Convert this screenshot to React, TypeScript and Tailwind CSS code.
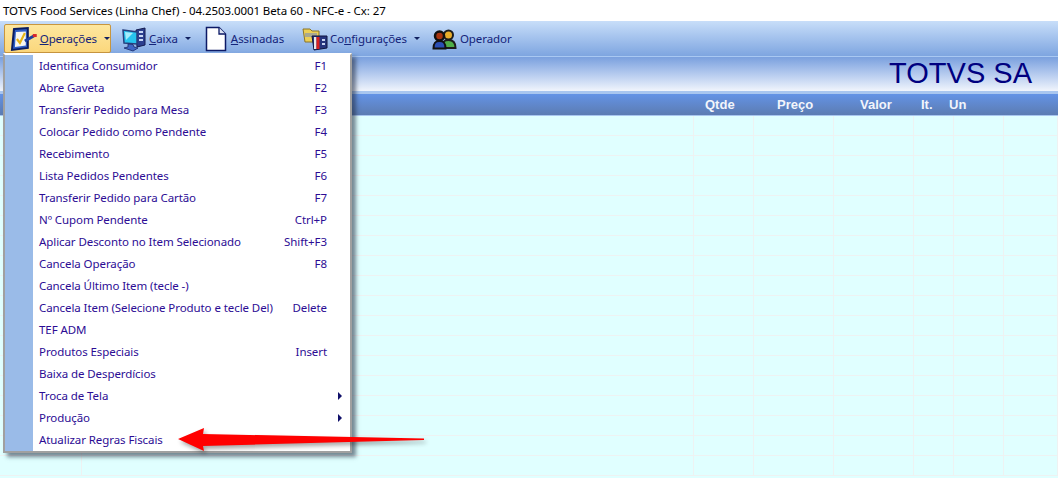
import React from 'react';

const menuItems: { label: string; shortcut?: string; submenu?: boolean }[] = [
  { label: 'Identifica Consumidor', shortcut: 'F1' },
  { label: 'Abre Gaveta', shortcut: 'F2' },
  { label: 'Transferir Pedido para Mesa', shortcut: 'F3' },
  { label: 'Colocar Pedido como Pendente', shortcut: 'F4' },
  { label: 'Recebimento', shortcut: 'F5' },
  { label: 'Lista Pedidos Pendentes', shortcut: 'F6' },
  { label: 'Transferir Pedido para Cartão', shortcut: 'F7' },
  { label: 'Nº Cupom Pendente', shortcut: 'Ctrl+P' },
  { label: 'Aplicar Desconto no Item Selecionado', shortcut: 'Shift+F3' },
  { label: 'Cancela Operação', shortcut: 'F8' },
  { label: 'Cancela Último Item (tecle -)' },
  { label: 'Cancela Item (Selecione Produto e tecle Del)', shortcut: 'Delete' },
  { label: 'TEF ADM' },
  { label: 'Produtos Especiais', shortcut: 'Insert' },
  { label: 'Baixa de Desperdícios' },
  { label: 'Troca de Tela', submenu: true },
  { label: 'Produção', submenu: true },
  { label: 'Atualizar Regras Fiscais' },
];

const rows = Array.from({ length: 18 });
const gridCols = 'grid grid-cols-[82px_612px_60px_80px_80px_40px_50px_1fr]';

function Caret() {
  return <span className="ml-[7px] h-0 w-0 border-x-[3px] border-t-[3px] border-x-transparent border-t-[#10205f]" />;
}

function OperacoesIcon() {
  return (
    <svg width="32" height="26" viewBox="0 0 32 26">
      <path d="M6 3 L20 2 L20 22 L4 24 Z" fill="#2f5fc8" stroke="#0a1c60" strokeWidth="2" />
      <path d="M8 6 L18 5.5 L18 19.5 L7 21 Z" fill="#f6f6f2" />
      <path d="M9 13 L12 17 L17 7" fill="none" stroke="#e6b416" strokeWidth="2.2" />
      <path d="M17 15 L26 10" stroke="#1d3f9e" strokeWidth="3" />
      <rect x="25" y="8" width="4" height="3" fill="#d8242a" />
    </svg>
  );
}

function CaixaIcon() {
  return (
    <svg width="26" height="26" viewBox="0 0 26 26">
      <path d="M15 4 L24 2 L24 19 L16 21 Z" fill="#2c3f8f" stroke="#141c50" />
      <rect x="18" y="5" width="4" height="2" fill="#c9d8f5" />
      <rect x="18" y="9" width="4" height="2" fill="#c9d8f5" />
      <rect x="18" y="13" width="4" height="2" fill="#c9d8f5" />
      <path d="M2 4 L16 6 L16 18 L3 17 Z" fill="#27c4ee" stroke="#28407e" strokeWidth="1.5" />
      <path d="M4 6 L12 7 L5 14 Z" fill="#a6ecfb" />
      <path d="M7 18 L12 18.5 L13 21 L17 22 L12 25 L3 22 L7 21 Z" fill="#3e66c4" stroke="#1b2a68" strokeWidth="0.8" />
    </svg>
  );
}

function DocumentoIcon() {
  return (
    <svg width="22" height="26" viewBox="0 0 22 26">
      <path d="M1.5 1.5 H14 L20.5 8 V24.5 H1.5 Z" fill="#ffffff" stroke="#0c1a66" strokeWidth="1.5" />
      <path d="M14 1.5 V8 H20.5" fill="#dfe6f5" stroke="#0c1a66" strokeWidth="1.3" />
    </svg>
  );
}

function ConfigIcon() {
  return (
    <svg width="26" height="24" viewBox="0 0 26 24">
      <path d="M1 2 H8 L10 4 H17 V15 H3 Z" fill="#eccf55" stroke="#8a7428" />
      <rect x="3" y="6" width="12" height="4" fill="#a8a890" />
      <path d="M10 9 H25 V21 L12 23 Z" fill="#26357e" stroke="#0f1440" />
      <rect x="12" y="10" width="2.5" height="12" fill="#e9e9e9" />
      <rect x="14.5" y="10" width="3" height="12" fill="#d8201f" />
      <rect x="20" y="12" width="3" height="2" fill="#c7d3f0" />
      <rect x="20" y="16" width="3" height="2" fill="#c7d3f0" />
    </svg>
  );
}

function OperadorIcon() {
  return (
    <svg width="26" height="22" viewBox="0 0 26 22">
      <circle cx="16.5" cy="7" r="4.5" fill="#e9ad2a" stroke="#1c1c1c" strokeWidth="2" />
      <path d="M10 20 C10 13 13 12 16.5 12 C20 12 23.5 13 23.5 20 Z" fill="#4fae48" stroke="#1c1c1c" strokeWidth="2" />
      <circle cx="7.5" cy="8" r="4.5" fill="#a8340f" stroke="#111111" strokeWidth="2.5" />
      <path d="M1.5 20.5 C1.5 14 4 13 7.5 13 C11 13 13.5 14 13.5 20.5 Z" fill="#2b4fb5" stroke="#111111" strokeWidth="2" />
    </svg>
  );
}

export default function App() {
  return (
    <div className="relative flex h-[478px] w-[1058px] flex-col overflow-hidden bg-white font-['Noto_Sans',sans-serif] text-[11.5px] tracking-[-0.08px]">
      <div className="flex h-[21px] items-center pl-[3px] text-black">
        TOTVS Food Services (Linha Chef) - 04.2503.0001 Beta 60 - NFC-e - Cx: 27
      </div>

      <div className="flex h-[36px] items-center border-b border-[#a9c8f2] bg-gradient-to-b from-[#c8def9] to-[#7ea5e0] pl-[4px] text-[#14247a]">
        <div className="flex h-[29px] w-[107px] items-center rounded-[2px] border border-[#c8963f] bg-gradient-to-b from-[#fde79f] to-[#fbd77c] pl-[3px]">
          <OperacoesIcon />
          <span><u>O</u>perações</span>
          <Caret />
        </div>
        <div className="ml-[10px] flex items-center">
          <CaixaIcon />
          <span className="ml-[2px]"><u>C</u>aixa</span>
          <Caret />
        </div>
        <div className="ml-[14px] flex items-center">
          <DocumentoIcon />
          <span className="ml-[4px]"><u>A</u>ssinadas</span>
        </div>
        <div className="ml-[18px] flex items-center">
          <ConfigIcon />
          <span className="ml-[2px]">Co<u>n</u>figurações</span>
          <Caret />
        </div>
        <div className="ml-[12px] flex items-center">
          <OperadorIcon />
          <span className="ml-[2px]">Operador</span>
        </div>
      </div>

      <div className="flex h-[34px] items-center justify-end bg-gradient-to-b from-[#7aa0de] to-[#f1f5fc] pr-[26px] font-['Liberation_Sans',sans-serif] text-[29px] tracking-normal text-[#000080]">
        TOTVS SA
      </div>
      <div className="h-[3px] bg-[#a9c6ef]" />

      <div className={`${gridCols} h-[21px] items-center bg-gradient-to-b from-[#6493e6] to-[#5c7cb2] font-['Liberation_Sans',sans-serif] text-[13px] font-bold tracking-normal text-[#f2f5fb]`}>
        <span />
        <span />
        <span className="pl-[11px]">Qtde</span>
        <span className="pl-[23px]">Preço</span>
        <span className="pl-[26px]">Valor</span>
        <span className="pl-[7px]">It.</span>
        <span className="-ml-[5px]">Un</span>
        <span />
      </div>

      <div className={`${gridCols} flex-1 content-start border-t border-[#a9c6ef] bg-[#e0ffff]`}>
        {rows.map((_, r) =>
          Array.from({ length: 8 }).map((_, c) => (
            <div key={`${r}-${c}`} className="h-[20px] border-r border-b border-[#eef2f2]" />
          )),
        )}
      </div>

      <div className="absolute top-[53px] left-[3px] flex w-[349px] border-2 border-[#a0a0a0] border-t-white bg-white shadow-[4px_4px_4px_rgba(30,40,60,0.55)]">
        <div className="w-[28px] shrink-0 bg-[#9abbe8]" />
        <ul className="flex-1 text-[#2c0c94]">
          {menuItems.map(item => (
            <li key={item.label} className="relative flex h-[22px] items-center pl-[6px]">
              <span>{item.label}</span>
              {item.shortcut && <span className="absolute right-[23px]">{item.shortcut}</span>}
              {item.submenu && (
                <span className="absolute right-[8px] h-0 w-0 border-y-[4px] border-l-[4px] border-y-transparent border-l-[#10106a]" />
              )}
            </li>
          ))}
        </ul>
      </div>

      <svg className="absolute top-[424px] left-[174px] drop-shadow-[2px_3px_2px_rgba(0,0,0,0.35)]" width="256" height="32" viewBox="174 424 256 32">
        <polygon points="178,439 204,428 203,434 424,438.5 424,440 203,446 204,451" fill="#ff0000" />
      </svg>
    </div>
  );
}
